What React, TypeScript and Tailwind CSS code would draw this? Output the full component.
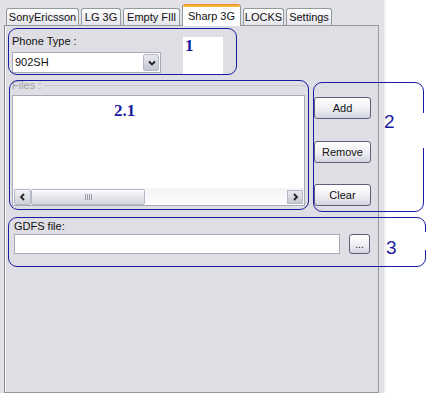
import React from 'react';

const tabs = [
  { label: 'SonyEricsson', w: 'w-[73px]' },
  { label: 'LG 3G', w: 'w-[40px]' },
  { label: 'Empty FIll', w: 'w-[57px]' },
  { label: 'Sharp 3G', w: 'w-[59px]', active: true },
  { label: 'LOCKS', w: 'w-[41px]' },
  { label: 'Settings', w: 'w-[46px]' },
];

function Tab({ label, w, active }: { label: string; w: string; active?: boolean }) {
  if (active) {
    return (
      <div className={`${w} h-[22px] -mb-px relative z-10 flex justify-center pt-[3px] bg-white border-x border-[#919b9c] rounded-t-[3px] overflow-hidden`}>
        <div className="absolute top-0 inset-x-0 h-[3px] bg-gradient-to-b from-[#e68b2c] to-[#ffc73c]" />
        <span className="mt-[1px]">{label}</span>
      </div>
    );
  }
  return (
    <div className={`${w} h-[17px] flex items-center justify-center pt-px border border-b-0 border-[#919b9c] rounded-t-[3px] bg-gradient-to-b from-white to-[#e4e4ec]`}>
      {label}
    </div>
  );
}

function XpButton({ label, className = '' }: { label: string; className?: string }) {
  return (
    <div className={`flex items-center justify-center border border-[#5d5d7c] rounded-[3px] bg-gradient-to-b from-white via-[#f1f1f5] to-[#d4d4e0] ${className}`}>
      {label}
    </div>
  );
}

function Chevron({ dir }: { dir: 'left' | 'right' | 'down' }) {
  const d = dir === 'left' ? 'M6 2 L3 5 L6 8' : dir === 'right' ? 'M3 2 L6 5 L3 8' : 'M2 3.5 L5 6.5 L8 3.5';
  return (
    <svg width="9" height="10" viewBox="0 0 9 10">
      <path d={d} fill="none" stroke="#222" strokeWidth="1.8" />
    </svg>
  );
}

export default function App() {
  return (
    <div className="relative w-[439px] h-[393px] bg-white overflow-hidden flex font-['Liberation_Sans',Arial,sans-serif] text-[11px] text-[#111]">
      <div className="w-[386px] h-full bg-[#e2e1e7] pl-[4px] pt-[4px] border-r-2 border-[#f2f2f4]">
        <div className="flex items-end gap-[2px] h-[21px] pl-[2px]">
          {tabs.map((t) => (
            <Tab key={t.label} {...t} />
          ))}
        </div>

        <div className="w-[375px] h-[368px] border border-[#919b9c] border-l-[#8a8a8a] bg-[#dfdee4] shadow-[inset_1px_0_0_#fff]">
          {/* phone type */}
          <div className="ml-[7px] mt-[9px]">
            <div className="h-[13px] leading-[13px]">Phone Type :</div>
            <div className="mt-[4px] w-[149px] h-[21px] bg-white border border-[#a5acb5] flex items-center justify-between pl-[2px] pr-[1px]">
              <span>902SH</span>
              <div className="w-[16px] h-[17px] rounded-[2px] border border-[#b5b8c8] bg-gradient-to-b from-[#e8e8ee] to-[#c4c6d4] flex items-center justify-center">
                <Chevron dir="down" />
              </div>
            </div>
          </div>

          {/* files + buttons */}
          <div className="mt-[6px] flex">
            <div className="ml-[3px] w-[300px]">
              <div className="flex items-center h-[13px] pl-[4px]">
                <span className="text-[#a3a3a3] leading-[13px]">Files :</span>
                <div className="flex-1 ml-[3px] border-t border-[#c9c9cf]" />
              </div>
              <div className="mt-[3px] ml-[4px] w-[293px] h-[111px] bg-white border border-[#a5acb5] flex flex-col justify-end">
                <div className="h-[17px] flex items-center bg-gradient-to-b from-[#f4f4f4] to-[#fdfdfd] px-[1px]">
                  <div className="w-[17px] h-[16px] rounded-[2px] border border-[#b5b8c8] bg-gradient-to-b from-[#f2f2f6] to-[#cfd0da] flex items-center justify-center">
                    <Chevron dir="left" />
                  </div>
                  <div className="w-[114px] h-[16px] rounded-[2px] border border-[#b5b8c8] bg-gradient-to-b from-[#fbfbfd] to-[#d4d5df] flex items-center justify-center gap-[1px]">
                    <div className="w-px h-[6px] bg-[#9a9aa8]" />
                    <div className="w-px h-[6px] bg-[#9a9aa8]" />
                    <div className="w-px h-[6px] bg-[#9a9aa8]" />
                    <div className="w-px h-[6px] bg-[#9a9aa8]" />
                  </div>
                  <div className="flex-1" />
                  <div className="w-[16px] h-[14px] border border-[#b5b8c8] bg-gradient-to-b from-[#e8e8ee] to-[#c8c9d4] flex items-center justify-center">
                    <Chevron dir="right" />
                  </div>
                </div>
              </div>
            </div>
            <div className="ml-[6px] w-[57px] pt-[18px] flex flex-col">
              <XpButton label="Add" className="h-[22px]" />
              <XpButton label="Remove" className="h-[22px] mt-[22px]" />
              <XpButton label="Clear" className="h-[22px] mt-[21px]" />
            </div>
          </div>

          {/* gdfs */}
          <div className="ml-[9px] mt-[14px]">
            <div className="h-[13px] leading-[13px]">GDFS file:</div>
            <div className="mt-[1px] flex">
              <div className="w-[326px] h-[20px] bg-white border border-[#a5acb5]" />
              <XpButton label="..." className="ml-[9px] w-[21px] h-[20px] text-[10px]" />
            </div>
          </div>
        </div>
      </div>

      {/* annotations */}
      <div className="absolute left-[8px] top-[28px] w-[229px] h-[47px] border border-[#1c1ca0] rounded-[9px]" />
      <div className="absolute left-[183px] top-[37px] w-[40px] h-[37px] bg-white">
        <span className="ml-[2px] font-['Liberation_Serif',serif] font-bold text-[17px] leading-[17px] text-[#1c1ca0]">1</span>
      </div>
      <div className="absolute left-[9px] top-[80px] w-[300px] h-[130px] border border-[#1c1ca0] rounded-[9px]" />
      <div className="absolute left-[114px] top-[98px] font-['Liberation_Serif',serif] font-bold text-[17px] text-[#1c1ca0]">2.1</div>
      <div className="absolute left-[313px] top-[82px] w-[111px] h-[130px] border border-[#1c1ca0] rounded-[9px]" />
      <div className="absolute left-[421px] top-[113px] w-[5px] h-[35px] bg-white" />
      <div className="absolute left-[384px] top-[108px] text-[19px] text-[#1c1ca0]">2</div>
      <div className="absolute left-[8px] top-[217px] w-[418px] h-[50px] border border-[#1c1ca0] rounded-[9px]" />
      <div className="absolute left-[423px] top-[232px] w-[5px] h-[18px] bg-white" />
      <div className="absolute left-[386px] top-[234px] text-[19px] text-[#1c1ca0]">3</div>
    </div>
  );
}
